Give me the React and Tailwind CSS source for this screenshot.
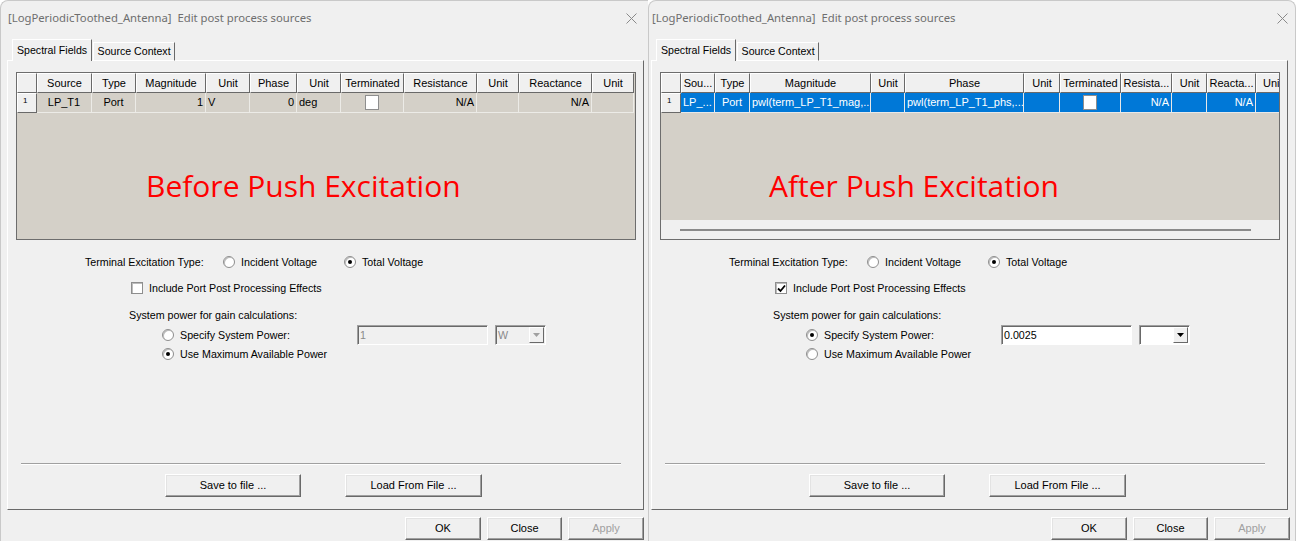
import React from 'react';

const ui = { fontFamily: '"Liberation Sans", Arial, sans-serif' };

const leftCols = [
  { w: 55, h: 'Source', v: 'LP_T1', a: 'center' },
  { w: 44, h: 'Type', v: 'Port', a: 'center' },
  { w: 70, h: 'Magnitude', v: '1', a: 'right' },
  { w: 44, h: 'Unit', v: 'V', a: 'left' },
  { w: 47, h: 'Phase', v: '0', a: 'right' },
  { w: 44, h: 'Unit', v: 'deg', a: 'left' },
  { w: 63, h: 'Terminated', box: true },
  { w: 73, h: 'Resistance', v: 'N/A', a: 'right' },
  { w: 42, h: 'Unit', v: '', a: 'left' },
  { w: 73, h: 'Reactance', v: 'N/A', a: 'right' },
  { w: 42, h: 'Unit', v: '', a: 'left' },
];

const rightCols = [
  { w: 34, h: 'Sou...', v: 'LP_...', a: 'left' },
  { w: 35, h: 'Type', v: 'Port', a: 'center' },
  { w: 121, h: 'Magnitude', v: 'pwl(term_LP_T1_mag,...', a: 'left' },
  { w: 34, h: 'Unit', v: '', a: 'left' },
  { w: 119, h: 'Phase', v: 'pwl(term_LP_T1_phs,...', a: 'left' },
  { w: 36, h: 'Unit', v: '', a: 'left' },
  { w: 61, h: 'Terminated', box: true },
  { w: 51, h: 'Resista...', v: 'N/A', a: 'right' },
  { w: 35, h: 'Unit', v: '', a: 'left' },
  { w: 49, h: 'Reacta...', v: 'N/A', a: 'right' },
  { w: 40, h: 'Unit', v: '', a: 'left', hl: true },
];

const alignCls = { left: 'justify-start pl-[2px]', right: 'justify-end pr-[2px]', center: 'justify-center' };

function Radio({ on }) {
  return (
    <span className="w-[12px] h-[12px] rounded-full border border-[#8e8e8e] bg-white flex items-center justify-center shrink-0 shadow-[inset_1px_1px_0_#bcbcbc]">
      {on && <span className="w-[4px] h-[4px] rounded-full bg-black" />}
    </span>
  );
}

function Check({ on }) {
  return (
    <span className="w-[12px] h-[12px] border border-[#8e8e8e] bg-white flex items-center justify-center shrink-0 shadow-[inset_1px_1px_0_#bcbcbc]">
      {on && (
        <svg width="9" height="9" viewBox="0 0 9 9">
          <path d="M1 4.5 L3.5 7 L8 1.5" stroke="#000" strokeWidth="1.8" fill="none" />
        </svg>
      )}
    </span>
  );
}

function Btn({ children, w, disabled, className = '' }) {
  return (
    <div
      className={`h-[23px] flex items-center justify-center bg-[#f0f0f0] border border-t-white border-l-white border-r-[#696969] border-b-[#696969] shadow-[inset_-1px_-1px_0_#a0a0a0,inset_1px_1px_0_#e3e3e3] text-[11px] ${disabled ? 'text-[#a0a0a0]' : 'text-black'} ${className}`}
      style={{ width: w }}
    >
      {children}
    </div>
  );
}

function Grid({ after }) {
  const cols = after ? rightCols : leftCols;
  return (
    <div className="relative w-[620px] h-[168px] ml-[8px] border border-[#6d6d6d] bg-[#d4d0c8] overflow-hidden flex flex-col">
      <div className="flex h-[20px] shrink-0">
        <div className="w-[20px] shrink-0 bg-[#f0f0f0] border border-t-white border-l-white border-r-[#696969] border-b-[#696969]" />
        {cols.map((c, i) => (
          <div
            key={i}
            className={`shrink-0 bg-[#f0f0f0] border border-t-white border-l-white border-r-[#696969] border-b-[#696969] flex items-center text-[11px] text-black whitespace-nowrap overflow-hidden ${c.hl ? 'justify-start pl-[6px]' : 'justify-center'}`}
            style={{ width: c.w }}
          >
            {c.h}
          </div>
        ))}
      </div>
      <div className="flex h-[20px] shrink-0">
        <div className="w-[20px] shrink-0 bg-[#f0f0f0] border border-t-white border-l-white border-r-[#696969] border-b-[#696969] text-[8px] leading-none pl-[5px] pt-[3px]">
          1
        </div>
        {cols.map((c, i) => (
          <div
            key={i}
            className={`shrink-0 flex items-center text-[11px] whitespace-nowrap overflow-hidden border-r border-b ${
              after ? 'bg-[#0078d7] text-white border-[#e8e8e8]' : 'bg-[#d4d0c8] text-black border-[#ecebe7]'
            } ${c.box ? 'justify-center' : alignCls[c.a]}`}
            style={{ width: c.w }}
          >
            {c.box ? <span className="w-[14px] h-[15px] bg-white border border-[#8e8e8e]" /> : c.v}
          </div>
        ))}
      </div>
      <div className="flex-1" />
      {after && (
        <div className="h-[19px] shrink-0 bg-[#f0f0f0] flex items-center pl-[19px]">
          <div className="w-[571px] h-[2px] bg-[#8a8a8a]" />
        </div>
      )}
      <div
        className={`absolute top-[94px] text-[30px] leading-[38px] text-[#ff0000] whitespace-nowrap ${after ? 'left-[108px]' : 'left-[129px]'}`}
        style={{ fontFamily: '"Open Sans", "Noto Sans", sans-serif' }}
      >
        {after ? 'After Push Excitation' : 'Before Push Excitation'}
      </div>
    </div>
  );
}

function Dialog({ after }) {
  return (
    <div className={`relative h-[541px] bg-[#f0f0f0] border-t border-l border-[#c9c9c9] rounded-tl-[8px] flex flex-col ${after ? 'w-[648px] pl-[2px] border-r rounded-tr-[8px]' : 'w-[648px] pl-[6px]'}`} style={ui}>
      {/* title bar */}
      <div className="h-[37px] flex items-center justify-between shrink-0 pr-[2px]">
        <div className="text-[11.3px] text-[#6e6e6e] pl-[1px] -mt-[3px] whitespace-pre" style={{ fontFamily: '"Noto Sans", "Open Sans", sans-serif' }}>
          {'[LogPeriodicToothed_Antenna]  Edit post process sources'}
        </div>
        <svg width="11" height="11" viewBox="0 0 11 11" className={`-mt-[3px] ${after ? 'mr-[5px]' : 'mr-[9px]'}`}>
          <path d="M0.5 0.5 L10.5 10.5 M10.5 0.5 L0.5 10.5" stroke="#8a8a8a" strokeWidth="1" />
        </svg>
      </div>
      {/* tabs */}
      <div className="flex items-end h-[23px] shrink-0 pl-[5px] -mb-[1px] relative z-10">
        <div className="h-[22px] px-[4px] flex items-center bg-[#f0f0f0] border border-b-0 border-t-white border-l-white border-r-[#696969] text-[10.6px] text-black">
          Spectral Fields
        </div>
        <div className="h-[19px] ml-[1px] px-[3.5px] flex items-center bg-[#f0f0f0] border border-t-white border-l-white border-r-[#696969] border-b-white text-[10.6px] text-black">
          Source Context
        </div>
      </div>
      {/* panel */}
      <div className="w-[637px] h-[450px] shrink-0 border border-t-white border-l-white border-r-[#696969] border-b-[#696969] pt-[11px] flex flex-col text-[10.7px] text-black">
        <Grid after={after} />
        <div className="flex items-center h-[16px] mt-[14px]">
          <span className="ml-[77px] w-[138px]">Terminal Excitation Type:</span>
          <Radio />
          <span className="ml-[6px] w-[103px]">Incident Voltage</span>
          <Radio on />
          <span className="ml-[6px]">Total Voltage</span>
        </div>
        <div className="flex items-center h-[16px] mt-[10px] ml-[123px]">
          <Check on={after} />
          <span className="ml-[6px]">Include Port Post Processing Effects</span>
        </div>
        <div className="flex items-center h-[16px] mt-[11px] ml-[121px]">System power for gain calculations:</div>
        <div className="flex items-center h-[20px] mt-[2px]">
          <span className="ml-[154px]">
            <Radio on={after} />
          </span>
          <span className="ml-[6px] w-[177px]">Specify System Power:</span>
          <div
            className={`w-[131px] h-[20px] border border-t-[#a0a0a0] border-l-[#a0a0a0] border-r-white border-b-white shadow-[inset_1px_1px_0_#696969] flex items-center pl-[2px] ${after ? 'bg-white text-black' : 'bg-[#f0f0f0] text-[#8a8a8a]'}`}
          >
            {after ? '0.0025' : '1'}
          </div>
          <div
            className={`ml-[7px] w-[51px] h-[20px] border border-t-[#a0a0a0] border-l-[#a0a0a0] border-r-white border-b-white shadow-[inset_1px_1px_0_#696969] flex items-center justify-between pl-[2px] pr-[1px] ${after ? 'bg-white' : 'bg-[#f0f0f0] text-[#8a8a8a]'}`}
          >
            <span>{after ? '' : 'W'}</span>
            <span className="w-[15px] h-[16px] bg-[#f0f0f0] border border-t-white border-l-white border-r-[#696969] border-b-[#696969] flex items-center justify-center">
              <svg width="7" height="4" viewBox="0 0 7 4">
                <path d="M0 0 L7 0 L3.5 4 Z" fill={after ? '#000' : '#a0a0a0'} />
              </svg>
            </span>
          </div>
        </div>
        <div className="flex items-center h-[16px] mt-[1px]">
          <span className="ml-[154px]">
            <Radio on={!after} />
          </span>
          <span className="ml-[6px]">Use Maximum Available Power</span>
        </div>
        <div className="ml-[13px] w-[600px] h-[2px] border-t border-[#a0a0a0] border-b border-b-white mt-[101px]" />
        <div className="flex mt-[9px]">
          <Btn w={136} className="ml-[157px]">Save to file ...</Btn>
          <Btn w={137} className="ml-[44px]">Load From File ...</Btn>
        </div>
      </div>
      {/* bottom buttons */}
      <div className={`flex justify-end gap-[6px] mt-[7px] ${after ? 'pr-[5px]' : 'pr-[4px]'}`}>
        <Btn w={76}>OK</Btn>
        <Btn w={75}>Close</Btn>
        <Btn w={76} disabled>Apply</Btn>
      </div>
    </div>
  );
}

export default function App() {
  return (
    <div className="w-[1296px] h-[541px] bg-white flex overflow-hidden">
      <Dialog />
      <Dialog after />
    </div>
  );
}
